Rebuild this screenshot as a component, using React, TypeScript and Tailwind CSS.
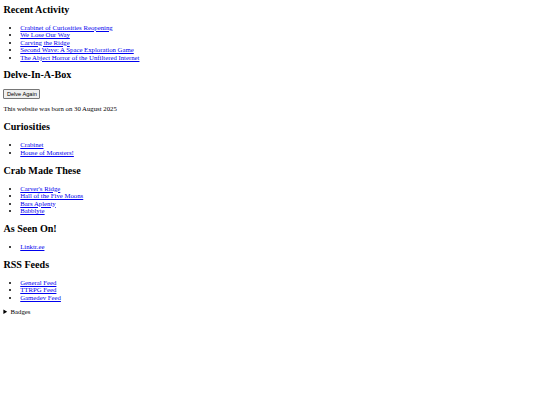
import React from "react";

const A = ({ children }: { children: React.ReactNode }) => (
  <a href="#" className="text-[#0000ee] underline">
    {children}
  </a>
);

const H2 = ({ children, first }: { children: React.ReactNode; first?: boolean }) => (
  <h2
    className={
      first
        ? "text-[10.125px] font-bold leading-[11.64px] mt-0 mb-[8.4px]"
        : "text-[10.125px] font-bold leading-[11.64px] my-[8.4px]"
    }
  >
    {children}
  </h2>
);

const List = ({ items }: { items: string[] }) => (
  <ul className="list-disc pl-[16.875px] my-[6.75px]">
    {items.map((t) => (
      <li key={t}>
        <A>{t}</A>
      </li>
    ))}
  </ul>
);

export default function App() {
  return (
    <div className="min-h-[405px] bg-white px-[3.375px] pt-[3.6px] pb-[3.375px] font-['Liberation_Serif',_serif] text-[6.75px] leading-[7.47px] text-black">
      <H2 first>Recent Activity</H2>
      <List
        items={[
          "Crabinet of Curiosities Reopening",
          "We Lose Our Way",
          "Carving the Ridge",
          "Second Wave: A Space Exploration Game",
          "The Abject Horror of the Unfiltered Internet",
        ]}
      />
      <H2>Delve-In-A-Box</H2>
      <div>
        <button className="font-['Liberation_Sans',_sans-serif] text-[5.625px] leading-[6.4px] px-[2.53px] py-[0.42px] border-[0.5px] border-[#767676] rounded-[1px] bg-[#efefef] text-black">
          Delve Again
        </button>
      </div>
      <p className="my-[6.75px]">This website was born on 30 August 2025</p>
      <H2>Curiosities</H2>
      <List items={["Crabinet", "House of Monsters!"]} />
      <H2>Crab Made These</H2>
      <List items={["Carver's Ridge", "Hall of the Five Moons", "Bars Aplenty", "Babblyte"]} />
      <H2>As Seen On!</H2>
      <List items={["Linktr.ee"]} />
      <H2>RSS Feeds</H2>
      <List items={["General Feed", "TTRPG Feed", "Gamedev Feed"]} />
      <details>
        <summary className="cursor-pointer">Badges</summary>
      </details>
    </div>
  );
}
